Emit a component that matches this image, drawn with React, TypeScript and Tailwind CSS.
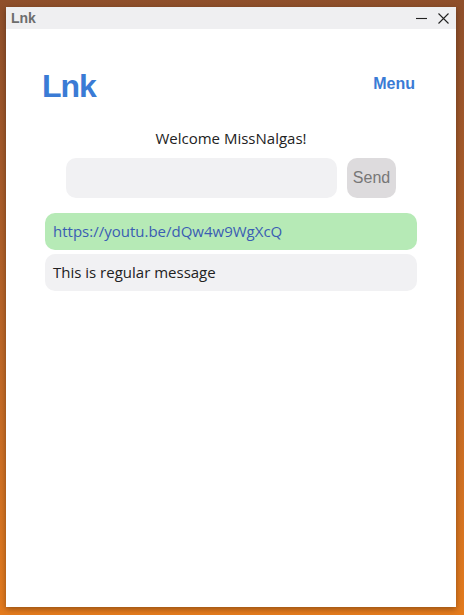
export default function App() {
  return (
    <div className="h-[615px] w-[464px] bg-gradient-to-b from-[#8f4f2b] to-[#e47b1d] pt-[7px] pl-[6px] font-['Open_Sans',sans-serif]">
      <div className="flex h-[600px] w-[450px] flex-col bg-white shadow-[0_2px_6px_rgba(0,0,0,0.35)]">
        <div className="flex h-[22px] items-center justify-between bg-[#efeff1] pl-[5px] pr-[6px]">
          <span className="font-['Liberation_Sans',sans-serif] text-[14px] font-bold text-[#6d6d6d]">Lnk</span>
          <div className="flex items-center gap-[9px] text-[#222]">
            <svg width="13" height="13" viewBox="0 0 13 13"><path d="M1 6.5h11" stroke="currentColor" strokeWidth="1.1" /></svg>
            <svg width="13" height="13" viewBox="0 0 13 13"><path d="M1.5 1.5l10 10M11.5 1.5l-10 10" stroke="currentColor" strokeWidth="1.1" /></svg>
          </div>
        </div>

        <div className="flex flex-col px-[36px] pt-[37px]">
          <div className="flex items-start justify-between">
            <span className="font-['Liberation_Sans',sans-serif] text-[32px] font-bold leading-[40px] tracking-[-1px] text-[#3a7bd5]">Lnk</span>
            <span className="mr-[5px] mt-[6px] font-['Liberation_Sans',sans-serif] text-[16px] font-bold text-[#3a7bd5]">Menu</span>
          </div>

          <p className="mt-[22px] text-center text-[15px] leading-[20px] text-[#222]">Welcome MissNalgas!</p>

          <div className="mt-[10px] flex justify-center gap-[10px]">
            <input className="h-[40px] w-[271px] rounded-[10px] bg-[#f1f1f3] px-3 outline-none" />
            <button className="h-[40px] w-[49px] rounded-[10px] bg-[#dddbdd] font-['Liberation_Sans',sans-serif] text-[16px] text-[#777]">Send</button>
          </div>

          <div className="mx-[3px] mt-[15px] flex flex-col gap-[4px]">
            <div className="flex h-[37px] items-center rounded-[10px] bg-[#b6eab6] px-[8px] text-[15px] text-[#3a5db3]">
              https://youtu.be/dQw4w9WgXcQ
            </div>
            <div className="flex h-[37px] items-center rounded-[10px] bg-[#f1f1f3] px-[8px] text-[15px] text-[#222]">
              This is regular message
            </div>
          </div>
        </div>
      </div>
    </div>
  );
}
